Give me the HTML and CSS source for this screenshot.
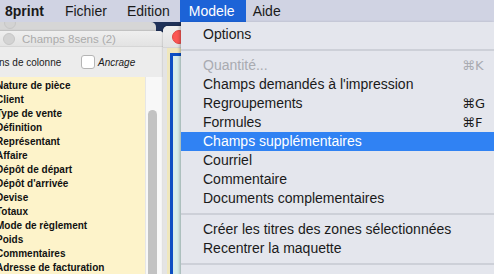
FILE: index.html
```html
<!DOCTYPE html>
<html lang="fr">
<head>
  <meta charset="UTF-8" />
  <title>8print - Modele</title>
  <link rel="stylesheet" href="styles.css">
</head>
<body>
  <div class="menubar">
    <span class="mb-item app">8print</span>
    <span class="mb-item">Fichier</span>
    <span class="mb-item">Edition</span>
    <span class="mb-item open">Modele</span>
    <span class="mb-item aide">Aide</span>
  </div>

  <div class="desktop">
    <div class="win-back"><span class="dot"></span></div>

    <div class="win champs">
      <div class="titlebar">
        <span class="dot"></span>
        <span class="title">Champs 8sens (2)</span>
      </div>
      <div class="toolrow">
        <span class="cut">ns de colonne</span>
        <label class="check"><span class="box"></span><em>Ancrage</em></label>
      </div>
      <div class="listwrap">
        <ul class="list">
          <li>Nature de pièce</li>
          <li>Client</li>
          <li>Type de vente</li>
          <li>Définition</li>
          <li>Représentant</li>
          <li>Affaire</li>
          <li>Dépôt de départ</li>
          <li>Dépôt d'arrivée</li>
          <li>Devise</li>
          <li>Totaux</li>
          <li>Mode de règlement</li>
          <li>Poids</li>
          <li>Commentaires</li>
          <li>Adresse de facturation</li>
        </ul>
        <div class="scrollbar"><div class="thumb"></div></div>
      </div>
    </div>

    <div class="win layout">
      <div class="titlebar"><span class="dot red"></span></div>
      <div class="layout-body">
        <div class="paper"><div class="frame"></div></div>
      </div>
    </div>
  </div>

  <div class="dropdown">
    <div class="item">Options</div>
    <div class="sep"></div>
    <div class="item disabled">Quantité...<span class="key">⌘K</span></div>
    <div class="item">Champs demandés à l'impression</div>
    <div class="item">Regroupements<span class="key">⌘G</span></div>
    <div class="item">Formules<span class="key">⌘F</span></div>
    <div class="item active">Champs supplémentaires</div>
    <div class="item">Courriel</div>
    <div class="item">Commentaire</div>
    <div class="item">Documents complementaires</div>
    <div class="sep"></div>
    <div class="item">Créer les titres des zones sélectionnées</div>
    <div class="item">Recentrer la maquette</div>
    <div class="sep"></div>
  </div>
</body>
</html>
```

FILE: styles.css
```css
body {
  margin: 0;
  width: 494px;
  height: 274px;
  overflow: hidden;
  position: relative;
  font-family: 'Liberation Sans', Arial, sans-serif;
  background: #1f3158;
  color: #1a1a1a;
}

/* menu bar */
.menubar {
  height: 22px;
  display: flex;
  align-items: center;
  background: #d0d3e3;
  font-size: 14px;
  position: relative;
  z-index: 3;
}
.mb-item {
  height: 22px;
  line-height: 22px;
  padding: 0 10px;
}
.mb-item.app {
  font-weight: bold;
  padding-left: 5px;
  padding-right: 11px;
}
.mb-item.open {
  background: #1c63d7;
  color: white;
  padding: 0 11px 0 9px;
}
.mb-item.aide {
  padding-left: 7px;
}

/* windows on the desktop */
.desktop {
  position: relative;
  height: 252px;
}
.win-back {
  position: absolute;
  left: 0;
  top: 0;
  width: 156px;
  height: 20px;
  background: #d6d6d6;
  border-radius: 0 5px 0 0;
}
.win-back .dot {
  position: absolute;
  left: 4px;
  top: -5px;
}
.dot {
  display: inline-block;
  width: 10px;
  height: 10px;
  border-radius: 50%;
  background: #d3d3d3;
  border: 1px solid #c6c6c6;
}
.dot.red {
  width: 12px;
  height: 12px;
  background: #fc5753;
  border-color: #df4744;
}

.win {
  position: absolute;
  border-radius: 5px 5px 0 0;
  overflow: hidden;
  box-shadow: 0 0 2px rgba(0, 0, 0, 0.35);
}
.champs {
  left: -10px;
  top: 9px;
  width: 174px;
  height: 250px;
  background: #ececec;
}
.titlebar {
  display: flex;
  align-items: center;
  gap: 7px;
  background: linear-gradient(#efefef, #e3e3e3);
  border-bottom: 1px solid #d6d6d6;
}
.champs .titlebar {
  height: 15px;
  padding-left: 13px;
}
.title {
  font-size: 11.5px;
  color: #ababab;
}
.toolrow {
  height: 30px;
  display: flex;
  align-items: center;
  font-size: 10px;
}
.cut {
  margin-left: 9px;
  width: 82px;
}
.check {
  display: flex;
  align-items: center;
  gap: 3px;
}
.box {
  width: 12px;
  height: 12px;
  background: white;
  border: 1px solid #b5b5b5;
  border-radius: 3px;
}
.check em {
  font-size: 10px;
}
.listwrap {
  display: flex;
  height: 200px;
}
.list {
  margin: 0;
  padding: 2px 0 0 6px;
  list-style: none;
  width: 149px;
  background: #fdf3ca;
  font-size: 10px;
  font-weight: bold;
  color: #111;
}
.list li {
  height: 14px;
  line-height: 14px;
  white-space: nowrap;
}
.scrollbar {
  width: 15px;
  background: #f8f8f8;
  border-left: 1px solid #e6e6e6;
  border-right: 1px solid #cfcfcf;
  padding: 33px 0 0 2px;
}
.thumb {
  width: 9px;
  height: 200px;
  border-radius: 5px;
  background: #c2c2c2;
}

.layout {
  left: 163px;
  top: 4px;
  width: 80px;
  height: 260px;
  background: #e4e4e4;
}
.layout .titlebar {
  height: 21px;
  padding-left: 9px;
}
.layout-body {
  padding-left: 4px;
  height: 240px;
}
.paper {
  height: 100%;
  background: #efe7bd;
  padding: 5px 0 0 3px;
  box-sizing: border-box;
}
.frame {
  height: 100%;
  background: #d5edea;
  border: 3px solid #0b4fc3;
  border-right: none;
}

/* dropdown menu */
.dropdown {
  position: absolute;
  left: 181px;
  top: 22px;
  width: 313px;
  height: 260px;
  padding-top: 3px;
  background: #e4e6ed;
  box-shadow: -1px 1px 3px rgba(0, 0, 0, 0.3);
  font-size: 14px;
  z-index: 4;
}
.item {
  height: 19px;
  line-height: 19px;
  padding: 0 8px 0 22px;
  display: flex;
  justify-content: space-between;
  white-space: nowrap;
}
.item.disabled {
  color: #a9abb1;
}
.item.active {
  background: #3082f3;
  color: white;
}
.key {
  width: 24px;
  font-family: 'DejaVu Sans', sans-serif;
  font-size: 13px;
}
.sep {
  height: 2px;
  margin: 5px 0;
  background: #cdd0d8;
}
```
